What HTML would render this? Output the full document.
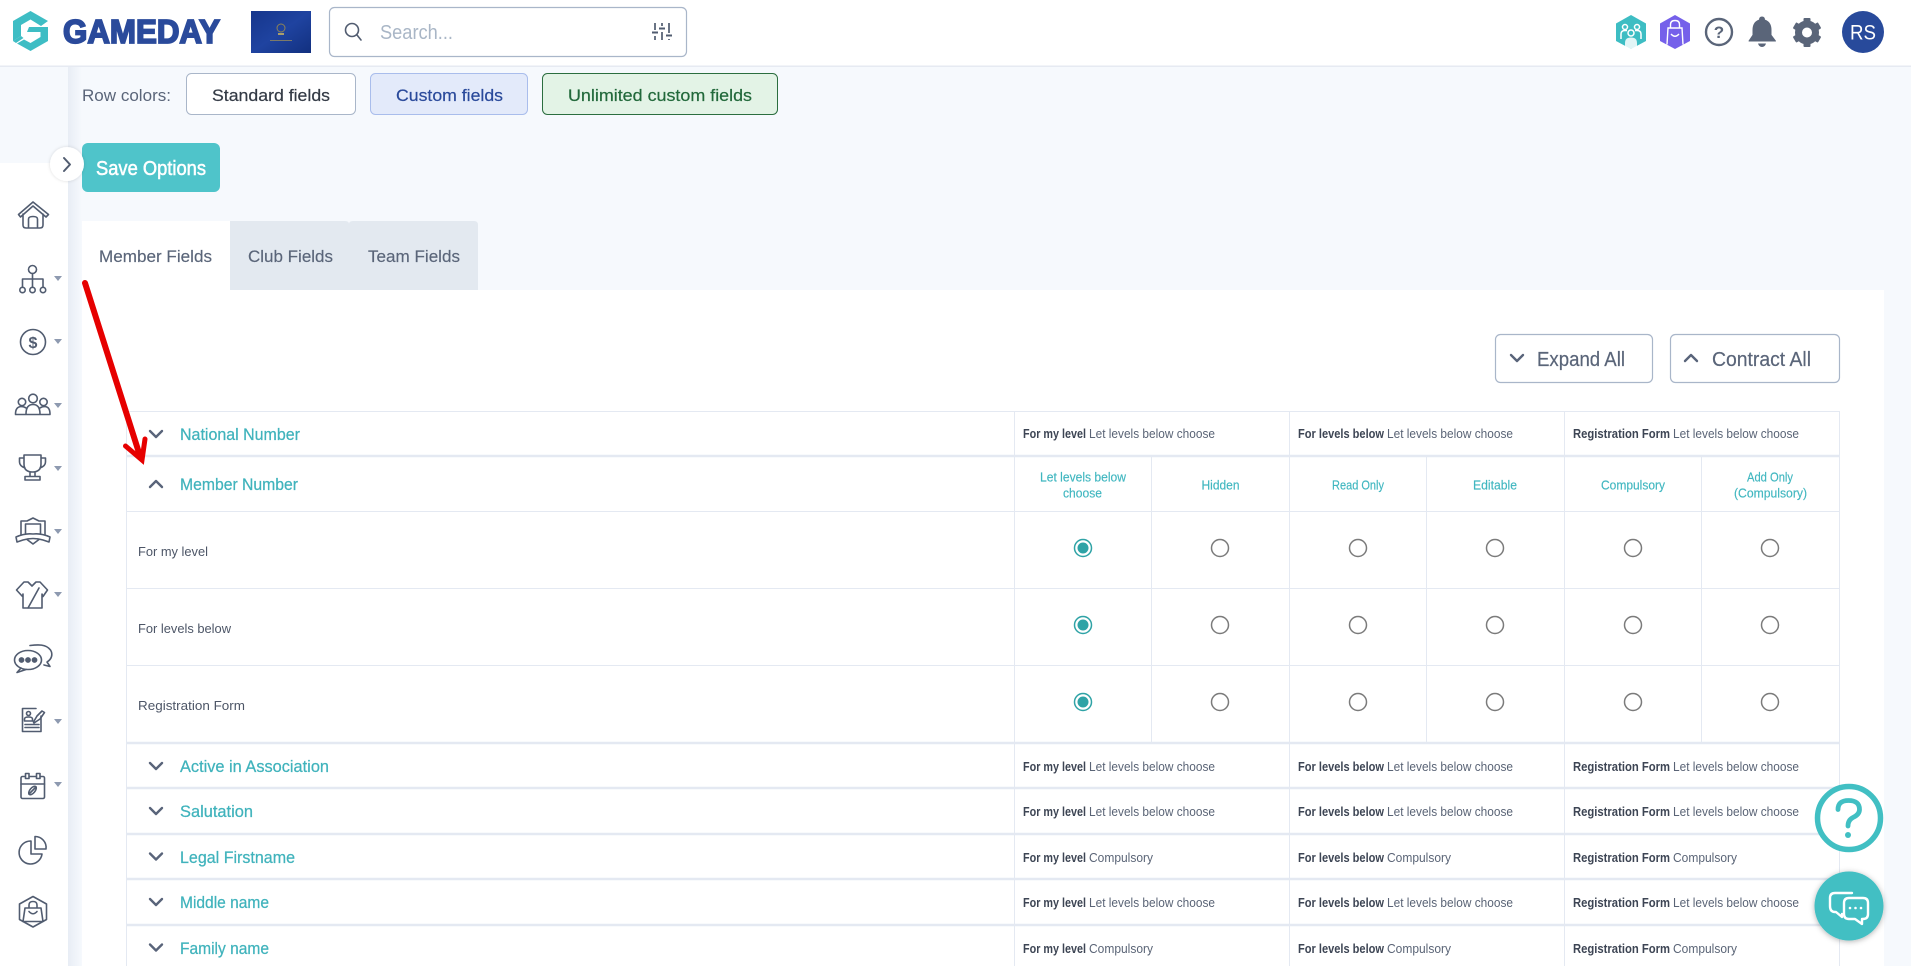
<!DOCTYPE html>
<html lang="en">
<head>
<meta charset="utf-8">
<title>Gameday - Field Options</title>
<style>
html,body{margin:0;padding:0;width:1911px;height:966px;overflow:hidden;background:#f6f9fd}
svg{display:block}
text{font-family:"Liberation Sans",sans-serif}
.nm{font-size:17px;fill:#40b3bc;stroke:#40b3bc;stroke-width:.25}
.b{font-size:12.5px;font-weight:700;fill:#3d4554}
.r{font-size:12.5px;fill:#5a6476}
.l{font-size:13px;fill:#4d5667}
.h{font-size:12.5px;fill:#41b7c0;stroke:#41b7c0;stroke-width:.15}
.btn{font-size:20px;fill:#5a6579;stroke:#5a6579;stroke-width:.2}
.tab{font-size:17px;fill:#5a6579;stroke:#5a6579;stroke-width:.15}
.ic{fill:none;stroke:#515c70;stroke-width:1.6;stroke-linecap:round;stroke-linejoin:round}
.ln{stroke:#e4e9f2;stroke-width:1}
.th{stroke:#e4e9f2;stroke-width:2.4}
.ch{fill:none;stroke:#59647a;stroke-width:2.4;stroke-linecap:round;stroke-linejoin:round}
.rd{fill:#fff;stroke:#7b7b7b;stroke-width:1.5}
.rs{fill:#fff;stroke:#2fa3a6;stroke-width:1.5}
.dt{fill:#2fa3a6}
.ca{fill:#8e9ab0}
</style>
</head>
<body>
<svg width="1911" height="966" viewBox="0 0 1911 966" xmlns="http://www.w3.org/2000/svg">
<defs>
<linearGradient id="sg" x1="0" x2="1" y1="0" y2="0"><stop offset="0" stop-color="#e8edf5"/><stop offset="1" stop-color="#f6f9fd"/></linearGradient>
<linearGradient id="bl" x1="0" x2="1" y1="0" y2="1"><stop offset="0" stop-color="#16368c"/><stop offset=".5" stop-color="#1f43a0"/><stop offset="1" stop-color="#12307f"/></linearGradient>
<filter id="sh" x="-30%" y="-30%" width="160%" height="160%"><feDropShadow dx="0" dy="1" stdDeviation="3" flood-color="#000" flood-opacity=".3"/></filter>
<filter id="sh2" x="-30%" y="-30%" width="160%" height="160%"><feDropShadow dx="0" dy="0" stdDeviation="1.5" flood-color="#000" flood-opacity=".15"/></filter>
</defs>

<!-- backgrounds -->
<rect width="1911" height="966" fill="#f6f9fd"/>
<rect x="0" y="163" width="68" height="803" fill="#fff"/>
<rect x="68" y="66" width="14" height="900" fill="url(#sg)"/>
<rect x="82" y="290" width="1802" height="676" fill="#fff"/>

<!-- header -->
<rect width="1911" height="66" fill="#fff"/>
<rect y="65.500" width="1911" height="1.500" fill="#e6eaf2"/>
<path d="M30.500 11 48 21 41 26 30.500 19.500 21 25V36L13 41V21Z" fill="#3ebdc4"/>
<path d="M13 41 21 36 23.500 38 16 43ZM27 32 29 27H48V41L30.500 51 17 43.500 24 39.500 30.500 43 40.500 37V32Z" fill="#3ebdc4"/>
<text x="63" y="43" font-size="33" font-weight="700" fill="#2a4a9b" stroke="#2a4a9b" stroke-width="1.800" textLength="157" lengthAdjust="spacingAndGlyphs">GAMEDAY</text>
<rect x="251" y="11" width="60" height="42" fill="url(#bl)"/>
<circle cx="281" cy="28" r="4" fill="none" stroke="#8d8358" stroke-width="1"/>
<rect x="270" y="40" width="22" height="1" fill="#7d7a68"/><rect x="278" y="33" width="6" height="2" fill="#a99e6c"/>
<rect x="329.500" y="7.500" width="357" height="49" rx="5" fill="#fff" stroke="#a9b6c9" stroke-width="1.200"/>
<circle cx="352" cy="30" r="6.500" fill="none" stroke="#515c70" stroke-width="1.600"/>
<path d="M357 35 361 40" class="ic"/>
<text x="380" y="39" font-size="20" fill="#a9b6c6" textLength="73" lengthAdjust="spacingAndGlyphs">Search...</text>
<path d="M655 23V30M655 36V40M662 23V26M662 32V40M669 23V33M669 39V40" fill="none" stroke="#515c70" stroke-width="1.700"/>
<path d="M652 32.500H658M659 28.500H665M666 35.500H672" fill="none" stroke="#515c70" stroke-width="2"/>

<!-- top right icons -->
<path d="M1631 15 1646 23.500V41L1631 49 1616 41V23.500Z" fill="#3dbdc3"/>
<g fill="none" stroke="#fff" stroke-width="1.500"><circle cx="1625" cy="27" r="2.500"/><circle cx="1637" cy="27" r="2.500"/><circle cx="1631" cy="33" r="3"/><path d="M1621 39V34Q1621 30.500 1625 30.500H1627M1641 39V34Q1641 30.500 1637 30.500H1635"/></g>
<path d="M1625 47V43Q1625 37.500 1631 37.500 1637 37.500 1637 43V47L1631 49Z" fill="#fff" opacity=".85"/>
<path d="M1675 15 1690 23.500V41L1675 49 1660 41V23.500Z" fill="#7560ea"/>
<g fill="none" stroke="#fff" stroke-width="1.400"><path d="M1667 44.500 1668 28H1682L1683 44.500"/><path d="M1670.500 28V24.500Q1670.500 20.500 1675 20.500 1679.500 20.500 1679.500 24.500V28M1671 34Q1675 38.500 1679 34"/></g>
<circle cx="1719" cy="32" r="13" fill="none" stroke="#5a6579" stroke-width="2.400"/>
<text x="1719" y="38" font-size="17" font-weight="700" fill="#5a6579" text-anchor="middle">?</text>
<path d="M1762 17Q1764.500 17 1764.500 20 1771 22 1771 30V35L1775.500 41H1749L1753 35V30Q1753 22 1759.500 20 1759.500 17 1762 17Z" fill="#5a6579" stroke="#5a6579" stroke-linejoin="round"/>
<path d="M1758 43.500H1766Q1765 47 1762 47 1759 47 1758 43.500Z" fill="#5a6579"/>
<g transform="translate(1807 32.500)"><circle r="8.500" fill="none" stroke="#5a6579" stroke-width="7"/><g fill="#5a6579"><rect x="-3.500" y="-14.500" width="7" height="7" rx="1"/><rect x="-3.500" y="7.500" width="7" height="7" rx="1"/><rect x="-3.500" y="-14.500" width="7" height="7" rx="1" transform="rotate(60)"/><rect x="-3.500" y="7.500" width="7" height="7" rx="1" transform="rotate(60)"/><rect x="-3.500" y="-14.500" width="7" height="7" rx="1" transform="rotate(120)"/><rect x="-3.500" y="7.500" width="7" height="7" rx="1" transform="rotate(120)"/></g></g>
<circle cx="1863" cy="32" r="21" fill="#284a9b"/>
<text x="1863" y="39.500" font-size="21" fill="#fff" text-anchor="middle" textLength="26" lengthAdjust="spacingAndGlyphs">RS</text>

<!-- row colours -->
<text x="82" y="101" font-size="17" fill="#5a6579" textLength="89" lengthAdjust="spacingAndGlyphs">Row colors:</text>
<rect x="186.500" y="73.500" width="169" height="41" rx="5" fill="#fff" stroke="#a9b6c9"/>
<text x="212" y="101" font-size="17" fill="#333a45" stroke="#333a45" stroke-width=".2" textLength="118" lengthAdjust="spacingAndGlyphs">Standard fields</text>
<rect x="370.500" y="73.500" width="157" height="41" rx="5" fill="#e3eafa" stroke="#a9bdec"/>
<text x="396" y="101" font-size="17" fill="#2a4a9b" stroke="#2a4a9b" stroke-width=".2" textLength="107" lengthAdjust="spacingAndGlyphs">Custom fields</text>
<rect x="542.500" y="73.500" width="235" height="41" rx="5" fill="#e3f3e6" stroke="#2b6e3f"/>
<text x="568" y="101" font-size="17" fill="#22693b" stroke="#22693b" stroke-width=".2" textLength="184" lengthAdjust="spacingAndGlyphs">Unlimited custom fields</text>

<!-- save -->
<rect x="82" y="143" width="138" height="49" rx="6" fill="#4fc4ca"/>
<text x="96" y="175" font-size="20" fill="#fff" stroke="#fff" stroke-width=".5" textLength="110" lengthAdjust="spacingAndGlyphs">Save Options</text>
<circle cx="67" cy="164" r="17" fill="#fff" filter="url(#sh2)"/>
<path d="M64 158 70 164.500 64 171" fill="none" stroke="#515c70" stroke-width="2" stroke-linecap="round" stroke-linejoin="round"/>

<!-- tabs -->
<rect x="82" y="221" width="148" height="69" fill="#fff"/>
<path d="M230 221H345Q349 221 349 224 349 221 353 221H474Q478 221 478 225V290H230Z" fill="#e3e9f0"/>
<text x="99" y="262" class="tab" textLength="113" lengthAdjust="spacingAndGlyphs">Member Fields</text>
<text x="248" y="262" class="tab" textLength="85" lengthAdjust="spacingAndGlyphs">Club Fields</text>
<text x="368" y="262" class="tab" textLength="92" lengthAdjust="spacingAndGlyphs">Team Fields</text>

<!-- expand / contract -->
<rect x="1495.500" y="334.500" width="157" height="48" rx="5" fill="#fff" stroke="#a9b6c9" stroke-width="1.200"/>
<path class="ch" d="M1511 355 1517 361 1523 355"/>
<text x="1537" y="366" class="btn" textLength="88" lengthAdjust="spacingAndGlyphs">Expand All</text>
<rect x="1670.500" y="334.500" width="169" height="48" rx="5" fill="#fff" stroke="#a9b6c9" stroke-width="1.200"/>
<path class="ch" d="M1685 361 1691 355 1697 361"/>
<text x="1712" y="366" class="btn" textLength="99" lengthAdjust="spacingAndGlyphs">Contract All</text>

<!-- table lines -->
<path class="ln" d="M127 411.500H1840M127 511.500H1840M127 588.500H1840M127 665.500H1840"/>
<path class="ln" d="M126.500 411V966M1014.500 411V966M1289.500 411V966M1564.500 411V966M1839.500 411V966M1151.500 457V743M1426.500 457V743M1701.500 457V743"/>
<path class="th" d="M127 456H1840M127 743H1840M127 788H1840M127 834H1840M127 879H1840M127 925H1840"/>

<!-- row: National Number -->
<path class="ch" d="M150 431 156 437 162 431"/>
<text x="180" y="440" class="nm" textLength="120" lengthAdjust="spacingAndGlyphs">National Number</text>
<text x="1023" y="438" class="b" textLength="63" lengthAdjust="spacingAndGlyphs">For my level</text><text x="1089" y="438" class="r" textLength="126" lengthAdjust="spacingAndGlyphs">Let levels below choose</text>
<text x="1298" y="438" class="b" textLength="86" lengthAdjust="spacingAndGlyphs">For levels below</text><text x="1387" y="438" class="r" textLength="126" lengthAdjust="spacingAndGlyphs">Let levels below choose</text>
<text x="1573" y="438" class="b" textLength="97" lengthAdjust="spacingAndGlyphs">Registration Form</text><text x="1673" y="438" class="r" textLength="126" lengthAdjust="spacingAndGlyphs">Let levels below choose</text>

<!-- row: Member Number -->
<path class="ch" d="M150 487 156 481 162 487"/>
<text x="180" y="490" class="nm" textLength="118" lengthAdjust="spacingAndGlyphs">Member Number</text>
<text x="1040" y="481.500" class="h" textLength="86" lengthAdjust="spacingAndGlyphs">Let levels below</text>
<text x="1063" y="497.500" class="h" textLength="39" lengthAdjust="spacingAndGlyphs">choose</text>
<text x="1201.500" y="489.500" class="h" textLength="38" lengthAdjust="spacingAndGlyphs">Hidden</text>
<text x="1332" y="489.500" class="h" textLength="52" lengthAdjust="spacingAndGlyphs">Read Only</text>
<text x="1473" y="489.500" class="h" textLength="44" lengthAdjust="spacingAndGlyphs">Editable</text>
<text x="1601" y="489.500" class="h" textLength="64" lengthAdjust="spacingAndGlyphs">Compulsory</text>
<text x="1747" y="481.500" class="h" textLength="46" lengthAdjust="spacingAndGlyphs">Add Only</text>
<text x="1734" y="497.500" class="h" textLength="73" lengthAdjust="spacingAndGlyphs">(Compulsory)</text>

<text x="138" y="556" class="l" textLength="70" lengthAdjust="spacingAndGlyphs">For my level</text>
<text x="138" y="633" class="l" textLength="93" lengthAdjust="spacingAndGlyphs">For levels below</text>
<text x="138" y="710" class="l" textLength="107" lengthAdjust="spacingAndGlyphs">Registration Form</text>

<!-- radios -->
<circle class="rs" cx="1083" cy="548" r="8.500"/><circle class="dt" cx="1083" cy="548" r="5.500"/>
<circle class="rd" cx="1220" cy="548" r="8.500"/><circle class="rd" cx="1358" cy="548" r="8.500"/><circle class="rd" cx="1495" cy="548" r="8.500"/><circle class="rd" cx="1633" cy="548" r="8.500"/><circle class="rd" cx="1770" cy="548" r="8.500"/>
<circle class="rs" cx="1083" cy="625" r="8.500"/><circle class="dt" cx="1083" cy="625" r="5.500"/>
<circle class="rd" cx="1220" cy="625" r="8.500"/><circle class="rd" cx="1358" cy="625" r="8.500"/><circle class="rd" cx="1495" cy="625" r="8.500"/><circle class="rd" cx="1633" cy="625" r="8.500"/><circle class="rd" cx="1770" cy="625" r="8.500"/>
<circle class="rs" cx="1083" cy="702" r="8.500"/><circle class="dt" cx="1083" cy="702" r="5.500"/>
<circle class="rd" cx="1220" cy="702" r="8.500"/><circle class="rd" cx="1358" cy="702" r="8.500"/><circle class="rd" cx="1495" cy="702" r="8.500"/><circle class="rd" cx="1633" cy="702" r="8.500"/><circle class="rd" cx="1770" cy="702" r="8.500"/>

<!-- row: Active in Association -->
<path class="ch" d="M150 763 156 769 162 763"/>
<text x="180" y="772" class="nm" textLength="149" lengthAdjust="spacingAndGlyphs">Active in Association</text>
<text x="1023" y="771" class="b" textLength="63" lengthAdjust="spacingAndGlyphs">For my level</text><text x="1089" y="771" class="r" textLength="126" lengthAdjust="spacingAndGlyphs">Let levels below choose</text>
<text x="1298" y="771" class="b" textLength="86" lengthAdjust="spacingAndGlyphs">For levels below</text><text x="1387" y="771" class="r" textLength="126" lengthAdjust="spacingAndGlyphs">Let levels below choose</text>
<text x="1573" y="771" class="b" textLength="97" lengthAdjust="spacingAndGlyphs">Registration Form</text><text x="1673" y="771" class="r" textLength="126" lengthAdjust="spacingAndGlyphs">Let levels below choose</text>

<!-- row: Salutation -->
<path class="ch" d="M150 808 156 814 162 808"/>
<text x="180" y="817" class="nm" textLength="73" lengthAdjust="spacingAndGlyphs">Salutation</text>
<text x="1023" y="816" class="b" textLength="63" lengthAdjust="spacingAndGlyphs">For my level</text><text x="1089" y="816" class="r" textLength="126" lengthAdjust="spacingAndGlyphs">Let levels below choose</text>
<text x="1298" y="816" class="b" textLength="86" lengthAdjust="spacingAndGlyphs">For levels below</text><text x="1387" y="816" class="r" textLength="126" lengthAdjust="spacingAndGlyphs">Let levels below choose</text>
<text x="1573" y="816" class="b" textLength="97" lengthAdjust="spacingAndGlyphs">Registration Form</text><text x="1673" y="816" class="r" textLength="126" lengthAdjust="spacingAndGlyphs">Let levels below choose</text>

<!-- row: Legal Firstname -->
<path class="ch" d="M150 853.500 156 859.500 162 853.500"/>
<text x="180" y="863" class="nm" textLength="115" lengthAdjust="spacingAndGlyphs">Legal Firstname</text>
<text x="1023" y="862" class="b" textLength="63" lengthAdjust="spacingAndGlyphs">For my level</text><text x="1089" y="862" class="r" textLength="64" lengthAdjust="spacingAndGlyphs">Compulsory</text>
<text x="1298" y="862" class="b" textLength="86" lengthAdjust="spacingAndGlyphs">For levels below</text><text x="1387" y="862" class="r" textLength="64" lengthAdjust="spacingAndGlyphs">Compulsory</text>
<text x="1573" y="862" class="b" textLength="97" lengthAdjust="spacingAndGlyphs">Registration Form</text><text x="1673" y="862" class="r" textLength="64" lengthAdjust="spacingAndGlyphs">Compulsory</text>

<!-- row: Middle name -->
<path class="ch" d="M150 899 156 905 162 899"/>
<text x="180" y="908" class="nm" textLength="89" lengthAdjust="spacingAndGlyphs">Middle name</text>
<text x="1023" y="907" class="b" textLength="63" lengthAdjust="spacingAndGlyphs">For my level</text><text x="1089" y="907" class="r" textLength="126" lengthAdjust="spacingAndGlyphs">Let levels below choose</text>
<text x="1298" y="907" class="b" textLength="86" lengthAdjust="spacingAndGlyphs">For levels below</text><text x="1387" y="907" class="r" textLength="126" lengthAdjust="spacingAndGlyphs">Let levels below choose</text>
<text x="1573" y="907" class="b" textLength="97" lengthAdjust="spacingAndGlyphs">Registration Form</text><text x="1673" y="907" class="r" textLength="126" lengthAdjust="spacingAndGlyphs">Let levels below choose</text>

<!-- row: Family name -->
<path class="ch" d="M150 944.500 156 950.500 162 944.500"/>
<text x="180" y="954" class="nm" textLength="89" lengthAdjust="spacingAndGlyphs">Family name</text>
<text x="1023" y="953" class="b" textLength="63" lengthAdjust="spacingAndGlyphs">For my level</text><text x="1089" y="953" class="r" textLength="64" lengthAdjust="spacingAndGlyphs">Compulsory</text>
<text x="1298" y="953" class="b" textLength="86" lengthAdjust="spacingAndGlyphs">For levels below</text><text x="1387" y="953" class="r" textLength="64" lengthAdjust="spacingAndGlyphs">Compulsory</text>
<text x="1573" y="953" class="b" textLength="97" lengthAdjust="spacingAndGlyphs">Registration Form</text><text x="1673" y="953" class="r" textLength="64" lengthAdjust="spacingAndGlyphs">Compulsory</text>

<!-- red arrow -->
<path d="M85 283 140 456" fill="none" stroke="#e60000" stroke-width="6" stroke-linecap="round"/>
<path d="M125.500 446 142 460 145 439" fill="none" stroke="#e60000" stroke-width="5" stroke-linecap="round" stroke-linejoin="miter"/>

<!-- sidebar icons -->
<path class="ic" d="M18.500 214.500 33 202 48.500 214.500 46 217 33 206 20.500 217ZM23 214V225Q23 228 26 228H40Q43 228 43 225V214M28.500 228V219Q28.500 216.500 33 216.500 37.500 216.500 37.500 219V228"/>

<g class="ic"><circle cx="32.500" cy="269.500" r="4"/><path d="M32.500 273.500V283M22.500 287V279H43V287M32.500 279V287"/><circle cx="22.500" cy="290" r="2.700"/><circle cx="32.500" cy="290" r="2.700"/><circle cx="43" cy="290" r="2.700"/></g>
<path class="ca" d="M54 276H62L58 281Z"/>

<g class="ic"><circle cx="33" cy="342" r="12.500"/></g>
<text x="33" y="348" font-size="16" font-weight="700" fill="#515c70" text-anchor="middle">$</text>
<path class="ca" d="M54 339H62L58 344Z"/>

<g class="ic"><circle cx="22" cy="402" r="3.700"/><circle cx="33" cy="398.500" r="4.300"/><circle cx="43.500" cy="402" r="3.700"/><path d="M15.500 414Q15.500 407 21 406.500 24 406.500 26 408M26 414Q26 404.500 33 404.500 40 404.500 40 414M40 408Q42 406.500 45 406.500 50 407 50 414M15.500 414.500H50"/></g>
<path class="ca" d="M54 403H62L58 408Z"/>

<g class="ic"><path d="M24 455H41V464Q41 472 32.500 472 24 472 24 464ZM24 458H19.500V462Q19.500 466 25 468M41 458H45.500V462Q45.500 466 40 468M30 472V476M35 472V476M25 476.500H40V480H25Z"/></g>
<path class="ca" d="M54 466H62L58 471Z"/>

<g class="ic"><path d="M33 518 39 521H45V535L33 544 21 535V521H27ZM25.500 524H40.500V534M25.500 524V534"/><path d="M16 537Q25 533 33 534 41 533 50 537L49 542 43 540Q33 537 23 540L17 542Z" fill="#fff"/></g>
<path class="ca" d="M54 529H62L58 534Z"/>

<g class="ic"><path d="M24 582 16.500 590 22.500 596.500 23 594V608H42V594L43 596.500 47.500 590 40 582H36L32 586 28 582ZM28 608 39 588"/></g>
<path class="ca" d="M54 592H62L58 597Z"/>

<g class="ic"><path d="M30 645.500C38 644.500 46 644 50.500 650 53 654 52 659 47 662L50 666.500 44 665"/><ellipse cx="28" cy="660" rx="13.500" ry="9.500" fill="#fff"/><path d="M21 668 17 672.500 26 669.500"/><circle cx="21.500" cy="660" r="2.100" fill="#515c70"/><circle cx="28" cy="660" r="2.100" fill="#515c70"/><circle cx="34.500" cy="660" r="2.100" fill="#515c70"/></g>

<g class="ic"><path d="M41 716V731.500H22.500V708.500H36"/><circle cx="28.500" cy="713.500" r="2"/><path d="M24.500 721V719Q24.500 717 28.500 717 32.500 717 32.500 719V721ZM25 724.500H39M25 727.500H39M33.500 722 37 716 42 711 44.500 712.500 40 719 34 723Z"/></g>
<path class="ca" d="M54 719H62L58 724Z"/>

<g class="ic"><rect x="21" y="776.500" width="23.500" height="22" rx="1.500"/><path d="M21 784H44.500"/><rect x="25.500" y="773.500" width="3.500" height="5" fill="#fff"/><rect x="36.500" y="773.500" width="3.500" height="5" fill="#fff"/><ellipse cx="32.500" cy="790.500" rx="2.500" ry="5" transform="rotate(40 32.500 790.500)"/><path d="M29 794 36 787"/></g>
<path class="ca" d="M54 782H62L58 787Z"/>

<g class="ic"><path d="M31 841A11.500 11.500 0 1 0 42 854H31ZM35 836.500A11 11 0 0 1 46 849H35Z"/></g>

<g class="ic"><path d="M33 896.500 46.500 904V919.500L33 927 19.500 919.500V904Z"/><path d="M25 908H41L43 921.500H23ZM29 908V905Q29 901.500 33 901.500 37 901.500 37 905V908M29 911.500Q33 916 37 911.500"/></g>

<!-- floating help / chat -->
<circle cx="1849" cy="818" r="31.500" fill="#fff" stroke="#41bfc3" stroke-width="5.500"/>
<path d="M1838 809.500Q1838 800.500 1848.500 800.500 1859.500 800.500 1859.500 809.500 1859.500 814.500 1853 817.500 1848 820 1848 826" fill="none" stroke="#41bfc3" stroke-width="4.800" stroke-linecap="round"/>
<circle cx="1848" cy="835" r="3" fill="#41bfc3"/>
<circle cx="1849" cy="906" r="34.500" fill="#43bfc3" filter="url(#sh)"/>
<path d="M1852 893H1835Q1830 893 1830 898V906Q1830 912 1835 912H1836L1842 917V914" fill="none" stroke="#fff" stroke-width="2.400" stroke-linejoin="round" stroke-linecap="round"/>
<path d="M1849 898H1863Q1868 898 1868 903V914Q1868 919 1863 919H1862L1862 924 1855 919H1849Q1844 919 1844 914V903Q1844 898 1849 898Z" fill="#43bfc3" stroke="#fff" stroke-width="2.400" stroke-linejoin="round"/>
<circle cx="1850" cy="908" r="1.300" fill="#fff"/><circle cx="1855.500" cy="908" r="1.300" fill="#fff"/><circle cx="1861" cy="908" r="1.300" fill="#fff"/>
</svg>
</body>
</html>
